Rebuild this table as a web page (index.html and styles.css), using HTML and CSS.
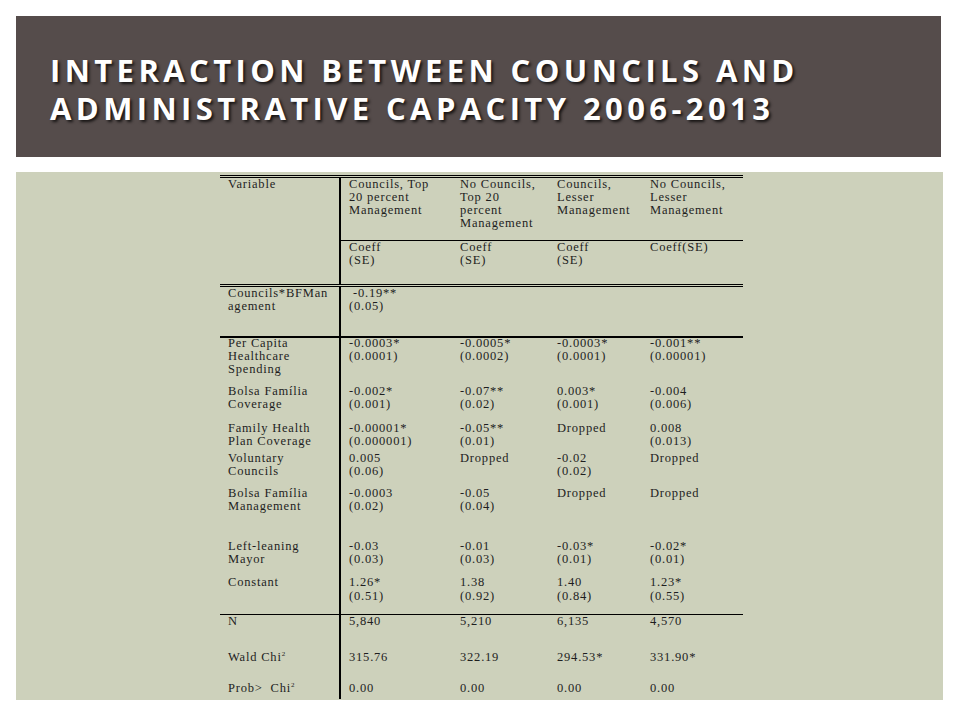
FILE: index.html
```html
<!DOCTYPE html>
<html>
<head>
<meta charset="utf-8">
<link rel="stylesheet" href="styles.css">
</head>
<body>
<div class="slide">
  <header class="title-bar">
    <h1 class="title">INTERACTION BETWEEN COUNCILS AND<br>ADMINISTRATIVE CAPACITY 2006-2013</h1>
  </header>
  <section class="content">
    <table class="results">
      <colgroup>
        <col class="c0"><col class="c1"><col class="c2"><col class="c3"><col class="c4">
      </colgroup>
      <tr class="r-head1">
        <td class="var" rowspan="2">Variable</td>
        <td>Councils, Top<br>20 percent<br>Management</td>
        <td>No Councils,<br>Top 20<br>percent<br>Management</td>
        <td>Councils,<br>Lesser<br>Management</td>
        <td>No Councils,<br>Lesser<br>Management</td>
      </tr>
      <tr class="r-head2">
        <td>Coeff<br>(SE)</td>
        <td>Coeff<br>(SE)</td>
        <td>Coeff<br>(SE)</td>
        <td>Coeff(SE)</td>
      </tr>
      <tr class="r-inter">
        <td class="var">Councils*BFMan<br>agement</td>
        <td><span class="indent">-0.19**</span><br>(0.05)</td>
        <td></td><td></td><td></td>
      </tr>
      <tr class="r-pc">
        <td class="var"><div class="lift">Per Capita<br>Healthcare<br>Spending</div></td>
        <td><div class="lift">-0.0003*<br>(0.0001)</div></td>
        <td><div class="lift">-0.0005*<br>(0.0002)</div></td>
        <td><div class="lift">-0.0003*<br>(0.0001)</div></td>
        <td><div class="lift">-0.001**<br>(0.00001)</div></td>
      </tr>
      <tr class="r-bfc">
        <td class="var">Bolsa Família<br>Coverage</td>
        <td>-0.002*<br>(0.001)</td>
        <td>-0.07**<br>(0.02)</td>
        <td>0.003*<br>(0.001)</td>
        <td>-0.004<br>(0.006)</td>
      </tr>
      <tr class="r-fh">
        <td class="var">Family Health<br>Plan Coverage</td>
        <td>-0.00001*<br>(0.000001)</td>
        <td>-0.05**<br>(0.01)</td>
        <td>Dropped</td>
        <td>0.008<br>(0.013)</td>
      </tr>
      <tr class="r-vol">
        <td class="var">Voluntary<br>Councils</td>
        <td>0.005<br>(0.06)</td>
        <td>Dropped</td>
        <td>-0.02<br>(0.02)</td>
        <td>Dropped</td>
      </tr>
      <tr class="r-bfm">
        <td class="var">Bolsa Família<br>Management</td>
        <td>-0.0003<br>(0.02)</td>
        <td>-0.05<br>(0.04)</td>
        <td>Dropped</td>
        <td>Dropped</td>
      </tr>
      <tr class="r-left">
        <td class="var">Left-leaning<br>Mayor</td>
        <td>-0.03<br>(0.03)</td>
        <td>-0.01<br>(0.03)</td>
        <td>-0.03*<br>(0.01)</td>
        <td>-0.02*<br>(0.01)</td>
      </tr>
      <tr class="r-const">
        <td class="var">Constant</td>
        <td>1.26*<br>(0.51)</td>
        <td>1.38<br>(0.92)</td>
        <td>1.40<br>(0.84)</td>
        <td>1.23*<br>(0.55)</td>
      </tr>
      <tr class="r-n">
        <td class="var">N</td>
        <td>5,840</td>
        <td>5,210</td>
        <td>6,135</td>
        <td>4,570</td>
      </tr>
      <tr class="r-wald">
        <td class="var">Wald Chi<sup>2</sup></td>
        <td>315.76</td>
        <td>322.19</td>
        <td>294.53*</td>
        <td>331.90*</td>
      </tr>
      <tr class="r-prob">
        <td class="var">Prob&gt;&nbsp;&nbsp;Chi<sup>2</sup></td>
        <td>0.00</td>
        <td>0.00</td>
        <td>0.00</td>
        <td>0.00</td>
      </tr>
    </table>
  </section>
</div>
</body>
</html>
```

FILE: styles.css
```css
html, body {
  margin: 0;
  padding: 0;
  background: #ffffff;
}

.slide {
  width: 960px;
  height: 720px;
  padding-top: 16px;
  box-sizing: border-box;
}

.title-bar {
  margin-left: 16px;
  width: 925px;
  height: 141px;
  box-sizing: border-box;
  padding: 35px 0 0 34px;
  background: #554c4b;
}

.title {
  margin: 0;
  font-family: "Open Sans", "Liberation Sans", sans-serif;
  font-weight: 700;
  font-size: 31px;
  line-height: 38px;
  letter-spacing: 4.4px;
  color: #ffffff;
  text-shadow: 2px 2px 3px rgba(0, 0, 0, 0.75);
  white-space: nowrap;
}

.content {
  margin: 15px 0 0 16px;
  width: 927px;
  height: 528px;
  box-sizing: border-box;
  padding: 3px 0 0 204px;
  background: #cdd1bb;
}

.results {
  border-collapse: collapse;
  width: 523px;
  table-layout: fixed;
  font-family: "Liberation Serif", "Times New Roman", serif;
  font-size: 12.5px;
  line-height: 13px;
  letter-spacing: 0.8px;
  color: #1e1e1e;
  border-top: 3px double #000;
}

.c0 { width: 120px; }
.c1 { width: 112px; }
.c2 { width: 97px; }
.c3 { width: 93px; }
.c4 { width: 101px; }

.results td {
  vertical-align: top;
  padding: 1px 0 0 8px;
  white-space: nowrap;
}

.results td.var {
  border-right: 2px solid #000;
}

.results sup {
  font-size: 7px;
  line-height: 0;
  letter-spacing: 0;
  vertical-align: 5px;
}

.indent { padding-left: 4px; }

.lift { margin-top: -1px; }

.r-head1 td { height: 62px; padding-top: 0; }
.r-head1 td:not(.var) { border-bottom: 1px solid #000; }
.r-head2 td { height: 43px; padding-top: 0; }
.r-head2 { border-bottom: 3px double #000; }
.r-inter td { height: 49px; padding-top: 0; }
.r-inter { border-bottom: 2px solid #000; }
.r-pc td { height: 46px; padding-top: 0; }
.r-bfc td { height: 36px; }
.r-fh td { height: 29px; }
.r-vol td { height: 34px; }
.r-bfm td { height: 52px; }
.r-left td { height: 34px; }
.r-const td { height: 39px; line-height: 14px; }
.r-const { border-bottom: 1px solid #000; }
.r-n td { height: 35px; padding-top: 0; }
.r-wald td { height: 30px; }
.r-prob td { height: 17px; }
```
